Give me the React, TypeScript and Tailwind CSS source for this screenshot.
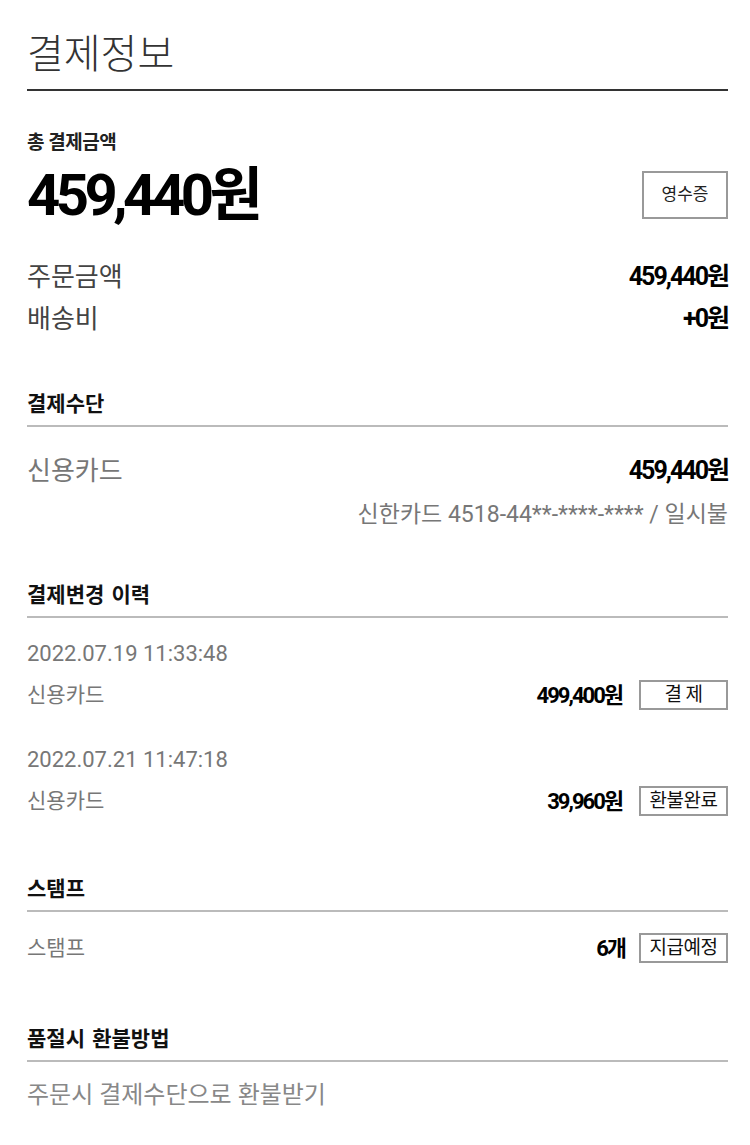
const font = {
  fontFamily: 'Roboto, "Noto Sans CJK KR", sans-serif',
};

export default function App() {
  return (
    <div
      className="w-[750px] min-h-[1145px] bg-white pl-[27px] pr-[22px] text-[#222]"
      style={font}
    >
      {/* Title */}
      <div className="pt-[30px] pb-[9px] border-b-2 border-[#333]">
        <h1 className="text-[40px] leading-[50px] font-light text-[#333]">결제정보</h1>
      </div>

      {/* Total */}
      <div className="pt-[39px]">
        <p className="text-[19px] leading-[26px] font-bold tracking-[-0.5px]">총 결제금액</p>
        <div className="flex items-center justify-between mt-[9px]">
          <span className="text-[58px] leading-[60px] font-bold tracking-[-4.5px] text-black">
            459,440원
          </span>
          <span className="border-2 border-[#999] w-[86px] h-[48px] flex items-center justify-center text-[17px] text-[#222]">
            영수증
          </span>
        </div>
      </div>

      <div className="mt-[35px] space-y-[8px]">
        <Row label="주문금액" value="459,440원" dark />
        <Row label="배송비" value="+0원" dark />
      </div>

      {/* Payment method */}
      <Heading className="mt-[54px]">결제수단</Heading>
      <div className="mt-[27px]">
        <Row label="신용카드" value="459,440원" />
        <p className="text-right text-[23px] leading-[30px] text-[#777] mt-[12px]">
          신한카드 4518-44**-****-**** / 일시불
        </p>
      </div>

      {/* History */}
      <Heading className="mt-[51px]">결제변경 이력</Heading>
      <div className="mt-[21px]">
        <History date="2022.07.19 11:33:48" amount="499,400원" tag="결 제" />
        <div className="mt-[35px]">
          <History date="2022.07.21 11:47:18" amount="39,960원" tag="환불완료" />
        </div>
      </div>

      {/* Stamp */}
      <Heading className="mt-[59px]">스탬프</Heading>
      <div className="mt-[20px] h-[32px] flex items-center justify-between">
        <span className="text-[21px] leading-[32px] text-[#777]">스탬프</span>
        <div className="flex items-center gap-[14px]">
          <span className="text-[22px] font-bold tracking-[-2px] text-black">6개</span>
          <Tag>지급예정</Tag>
        </div>
      </div>

      {/* Refund */}
      <Heading className="mt-[61px]">품절시 환불방법</Heading>
      <p className="mt-[17px] text-[24px] leading-[32px] text-[#888]">
        주문시 결제수단으로 환불받기
      </p>
    </div>
  );
}

function Heading({ children, className }: { children: React.ReactNode; className?: string }) {
  return (
    <div className={`border-b-2 border-[#bbb] pb-[7px] ${className ?? ""}`}>
      <p className="text-[21px] leading-[28px] font-bold text-[#111] [word-spacing:2px]">
        {children}
      </p>
    </div>
  );
}

function Row({ label, value, dark }: { label: string; value: string; dark?: boolean }) {
  return (
    <div className="flex items-center justify-between">
      <span className={`text-[26px] leading-[34px] ${dark ? "text-[#444]" : "text-[#777]"}`}>
        {label}
      </span>
      <span className="text-[25px] leading-[34px] font-bold tracking-[-2px] text-black">
        {value}
      </span>
    </div>
  );
}

function Tag({ children }: { children: React.ReactNode }) {
  return (
    <span className="border-2 border-[#999] w-[89px] h-[30px] flex items-center justify-center text-[19px] text-[#111] tracking-[-0.5px] whitespace-pre">
      {children}
    </span>
  );
}

function History({ date, amount, tag }: { date: string; amount: string; tag: string }) {
  return (
    <div>
      <p className="text-[22px] leading-[30px] text-[#777]">{date}</p>
      <div className="mt-[11px] h-[30px] flex items-center justify-between">
        <span className="text-[21px] leading-[30px] text-[#777]">신용카드</span>
        <div className="flex items-center gap-[17px]">
          <span className="text-[22px] font-bold tracking-[-2px] text-black">{amount}</span>
          <Tag>{tag}</Tag>
        </div>
      </div>
    </div>
  );
}
